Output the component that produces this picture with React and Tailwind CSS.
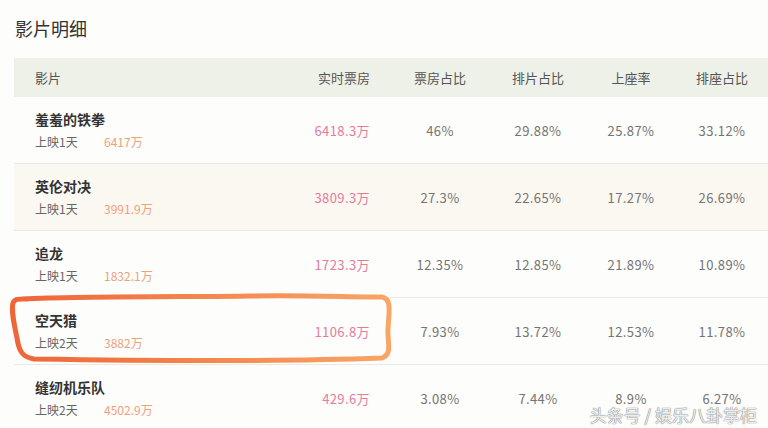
// App.jsx — 影片明细 box-office table
const FONT = { fontFamily: '"Noto Sans CJK SC", "Noto Sans", sans-serif' };

const rows = [
  { name: "羞羞的铁拳", days: "上映1天", sum: "6417万", bo: "6418.3万", p: ["46%", "29.88%", "25.87%", "33.12%"] },
  { name: "英伦对决", days: "上映1天", sum: "3991.9万", bo: "3809.3万", p: ["27.3%", "22.65%", "17.27%", "26.69%"], tint: true },
  { name: "追龙", days: "上映1天", sum: "1832.1万", bo: "1723.3万", p: ["12.35%", "12.85%", "21.89%", "10.89%"] },
  { name: "空天猎", days: "上映2天", sum: "3882万", bo: "1106.8万", p: ["7.93%", "13.72%", "12.53%", "11.78%"] },
  { name: "缝纫机乐队", days: "上映2天", sum: "4502.9万", bo: "429.6万", p: ["3.08%", "7.44%", "8.9%", "6.27%"] },
];

// the four ratio columns, centred under their headers
const ratioCols = ["w-[96px] ml-[22px]", "w-[96px] ml-[2px]", "w-[90px]", "w-[92px]"];

function Row({ r }) {
  return (
    <div className={`flex items-center h-[67px] pl-[21px] border-b border-[#e9e9e6] ${r.tint ? "bg-[#fbf7f1]" : ""}`}>
      <div className="w-[260px] shrink-0">
        <p className="text-[14px] font-bold text-[#333] leading-none">{r.name}</p>
        <p className="mt-[10px] text-[12px] leading-none flex">
          <span className="w-[69px] text-[#666]">{r.days}</span>
          <span className="text-[#eda27c]">{r.sum}</span>
        </p>
      </div>
      <div className="w-[75px] shrink-0 text-right text-[13px] tracking-[0.4px] text-[#e67b9c] pt-[2px]">{r.bo}</div>
      {r.p.map((v, i) => (
        <div key={i} className={`${ratioCols[i]} shrink-0 text-center text-[13px] tracking-[0.4px] text-[#747474] pt-[2px]`}>{v}</div>
      ))}
    </div>
  );
}

export default function App() {
  const headers = ["票房占比", "排片占比", "上座率", "排座占比"];
  return (
    <div className="relative w-[768px] h-[428px] overflow-hidden bg-[#fdfdfb]" style={FONT}>
      <h1 className="pl-[15px] pt-[16px] text-[18px] leading-[24px] text-[#333]">影片明细</h1>

      <div className="ml-[14px] mt-[18px]">
        <div className="flex items-center h-[39px] pl-[21px] bg-[#eef1e8] text-[13px] text-[#555]">
          <div className="w-[260px] shrink-0">影片</div>
          <div className="w-[75px] shrink-0 text-right">实时票房</div>
          {headers.map((h, i) => (
            <div key={h} className={`${ratioCols[i]} shrink-0 text-center`}>{h}</div>
          ))}
        </div>
        {rows.map((r) => (
          <Row key={r.name} r={r} />
        ))}
      </div>

      {/* hand-drawn highlight round 空天猎 */}
      <svg className="absolute left-0 top-0 pointer-events-none" width="768" height="428" viewBox="0 0 768 428">
        <defs>
          <linearGradient id="hl" x1="0" y1="0" x2="1" y2="0">
            <stop offset="0" stopColor="#ee6538" />
            <stop offset="1" stopColor="#f8a666" />
          </linearGradient>
        </defs>
        <path
          d="M22 299 C 90 296, 200 297, 250 296 C 300 295, 350 297, 382 297 C 392 299, 389 312, 388 328 C 387 342, 393 354, 382 358 C 300 361, 160 361, 34 359 C 22 357, 19 351, 17 338 C 14 324, 11 310, 13 303 C 15 298, 20 299, 28 299"
          fill="none"
          stroke="url(#hl)"
          strokeWidth="5"
          strokeLinecap="round"
          strokeLinejoin="round"
        />
      </svg>

      {/* watermark */}
      <div className="absolute right-[11px] bottom-[5px] text-[17px] leading-none text-[#eeeeee] [text-shadow:0_0_1px_#777,0_0_1px_#777]">
        头条号 / 娱乐八卦掌柜
      </div>
    </div>
  );
}
